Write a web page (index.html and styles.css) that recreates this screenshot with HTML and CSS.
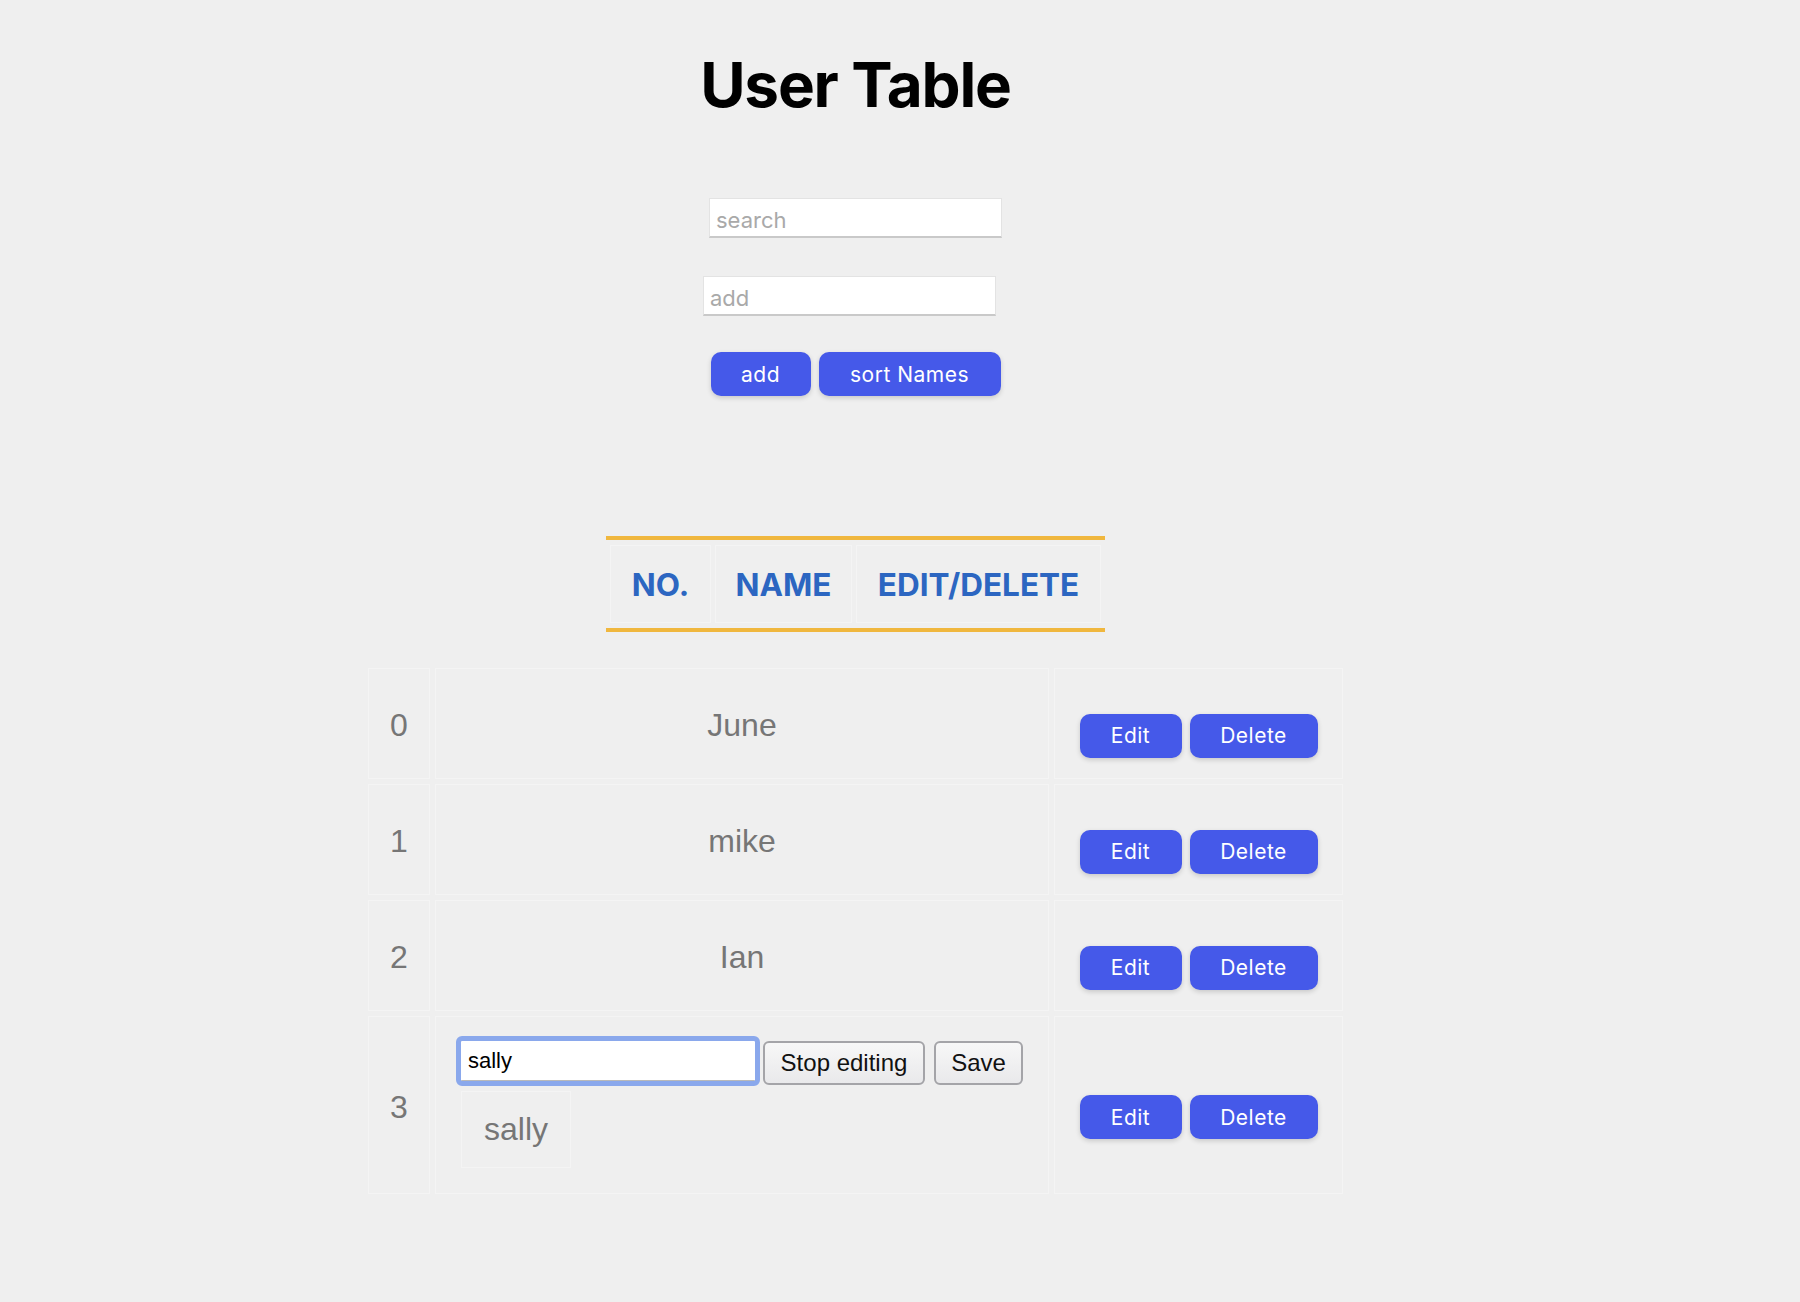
FILE: index.html
```html
<!DOCTYPE html>
<html lang="en">
<head>
<meta charset="utf-8">
<title>User Table</title>
<link rel="stylesheet" href="styles.css">
</head>
<body>
<div class="page">
  <h1 class="title">User Table</h1>

  <div class="field-row">
    <input class="text-input" type="text" placeholder="search">
  </div>
  <div class="field-row field-row-add">
    <input class="text-input" type="text" placeholder="add">
  </div>
  <div class="btn-row">
    <button class="btn-blue btn-add">add</button>
    <button class="btn-blue btn-sort">sort Names</button>
  </div>

  <div class="head-wrap">
    <div class="head-table">
      <div class="th">NO.</div>
      <div class="th">NAME</div>
      <div class="th">EDIT/DELETE</div>
    </div>
  </div>

  <div class="rows-wrap">
    <div class="rows">
      <div class="cell num"><span class="txt">0</span></div>
      <div class="cell name"><span class="txt">June</span></div>
      <div class="cell actions"><div class="act"><button class="btn-blue btn-edit">Edit</button><button class="btn-blue btn-del">Delete</button></div></div>

      <div class="cell num"><span class="txt">1</span></div>
      <div class="cell name"><span class="txt">mike</span></div>
      <div class="cell actions"><div class="act"><button class="btn-blue btn-edit">Edit</button><button class="btn-blue btn-del">Delete</button></div></div>

      <div class="cell num"><span class="txt">2</span></div>
      <div class="cell name"><span class="txt">Ian</span></div>
      <div class="cell actions"><div class="act"><button class="btn-blue btn-edit">Edit</button><button class="btn-blue btn-del">Delete</button></div></div>

      <div class="cell num"><span class="txt">3</span></div>
      <div class="name-edit">
        <div class="edit-row">
          <input class="edit-input" type="text" value="sally">
          <button class="btn-gray btn-stop">Stop editing</button>
          <button class="btn-gray btn-save">Save</button>
        </div>
        <div class="name-box">sally</div>
      </div>
      <div class="cell actions"><div class="act"><button class="btn-blue btn-edit">Edit</button><button class="btn-blue btn-del">Delete</button></div></div>
    </div>
  </div>
</div>
</body>
</html>
```

FILE: styles.css
```css
html, body {
  margin: 0;
  padding: 0;
  background: #efefef;
}

body {
  font-family: Inter, "Noto Sans", sans-serif;
}

.page {
  width: 1711px;
  padding-bottom: 40px;
}

.title {
  margin: 47px 0 0;
  font-family: Inter, sans-serif;
  font-weight: 700;
  font-size: 62px;
  line-height: 75px;
  letter-spacing: -1.2px;
  text-align: center;
  color: #000;
}

.field-row {
  display: flex;
  justify-content: center;
  margin-top: 76px;
}

.field-row-add {
  margin-top: 38px;
  padding-right: 12px;
}

.text-input {
  box-sizing: border-box;
  width: 293px;
  height: 40px;
  margin: 0;
  padding: 4px 6px 0;
  background: #fff;
  border: 1px solid #e3e3e3;
  border-bottom: 2px solid #c9c9c9;
  border-radius: 0;
  font-family: Inter, sans-serif;
  font-size: 22px;
  color: #222;
  outline: none;
}

.text-input::placeholder {
  color: #a9a9a9;
}

.btn-row {
  display: flex;
  justify-content: center;
  gap: 8px;
  margin-top: 36px;
}

.btn-blue {
  box-sizing: border-box;
  height: 44px;
  margin: 0;
  padding: 0;
  border: none;
  border-radius: 10px;
  background: #4559e9;
  color: #fff;
  font-family: Inter, sans-serif;
  font-size: 21px;
  letter-spacing: 0.5px;
  box-shadow: 0 2px 5px rgba(0, 0, 0, 0.16);
  cursor: pointer;
}

.btn-add { width: 100px; }
.btn-sort { width: 182px; }
.btn-edit { width: 102px; }
.btn-del { width: 128px; }

.head-wrap {
  display: flex;
  justify-content: center;
  margin-top: 140px;
}

.head-table {
  display: grid;
  grid-template-columns: 101px 137px 245px;
  gap: 4px;
  padding: 5px 4px;
  border-top: 4px solid #f0b73e;
  border-bottom: 4px solid #f0b73e;
}

.th {
  box-sizing: border-box;
  height: 78px;
  display: flex;
  align-items: center;
  justify-content: center;
  border: 1px solid #f4f4f4;
  font-family: Inter, sans-serif;
  font-weight: 700;
  font-size: 31.5px;
  color: #2c66c1;
  padding-top: 1px;
}

.rows-wrap {
  display: flex;
  justify-content: center;
  margin-top: 31px;
}

.rows {
  display: grid;
  grid-template-columns: 62px 614px 289px;
  grid-auto-rows: minmax(111px, auto);
  gap: 5px;
  padding: 5px;
}

.cell {
  box-sizing: border-box;
  border: 1px solid #f4f4f4;
  display: flex;
  align-items: center;
  justify-content: center;
}

.txt {
  font-family: "Liberation Sans", Arial, sans-serif;
  font-size: 32px;
  color: #767676;
  padding-top: 4px;
}

.actions .act {
  display: flex;
  gap: 8px;
  margin-top: 24px;
}

.name-edit {
  box-sizing: border-box;
  border: 1px solid #f4f4f4;
  padding: 20px 22px;
  display: flex;
  flex-direction: column;
  align-items: flex-start;
}

.edit-row {
  align-self: stretch;
  display: flex;
  justify-content: center;
  align-items: flex-start;
  margin-top: 4px;
  height: 44px;
}

.edit-input {
  box-sizing: border-box;
  width: 294px;
  height: 40px;
  margin: 0;
  padding: 0 7px;
  background: #fff;
  border: none;
  border-bottom: 1px solid #b9b9b9;
  border-radius: 1px;
  outline: 5px solid #8aa8ec;
  outline-offset: 0;
  font-family: "Liberation Sans", Arial, sans-serif;
  font-size: 22px;
  color: #000;
}

.btn-gray {
  box-sizing: border-box;
  height: 44px;
  margin: 0;
  padding: 0;
  border: 2px solid #a4a4a8;
  border-radius: 6px;
  background: linear-gradient(#f7f7f7, #e9e9eb);
  color: #111;
  font-family: "Liberation Sans", Arial, sans-serif;
  font-size: 24px;
  cursor: pointer;
}

.btn-stop {
  width: 162px;
  margin-left: 8px;
}

.btn-save {
  width: 89px;
  margin-left: 9px;
}

.name-box {
  box-sizing: border-box;
  margin: 6px 0 5px 3px;
  padding: 19px 22px;
  border: 1px solid #f4f4f4;
  font-family: "Liberation Sans", Arial, sans-serif;
  font-size: 32px;
  line-height: 37px;
  color: #767676;
}
```
